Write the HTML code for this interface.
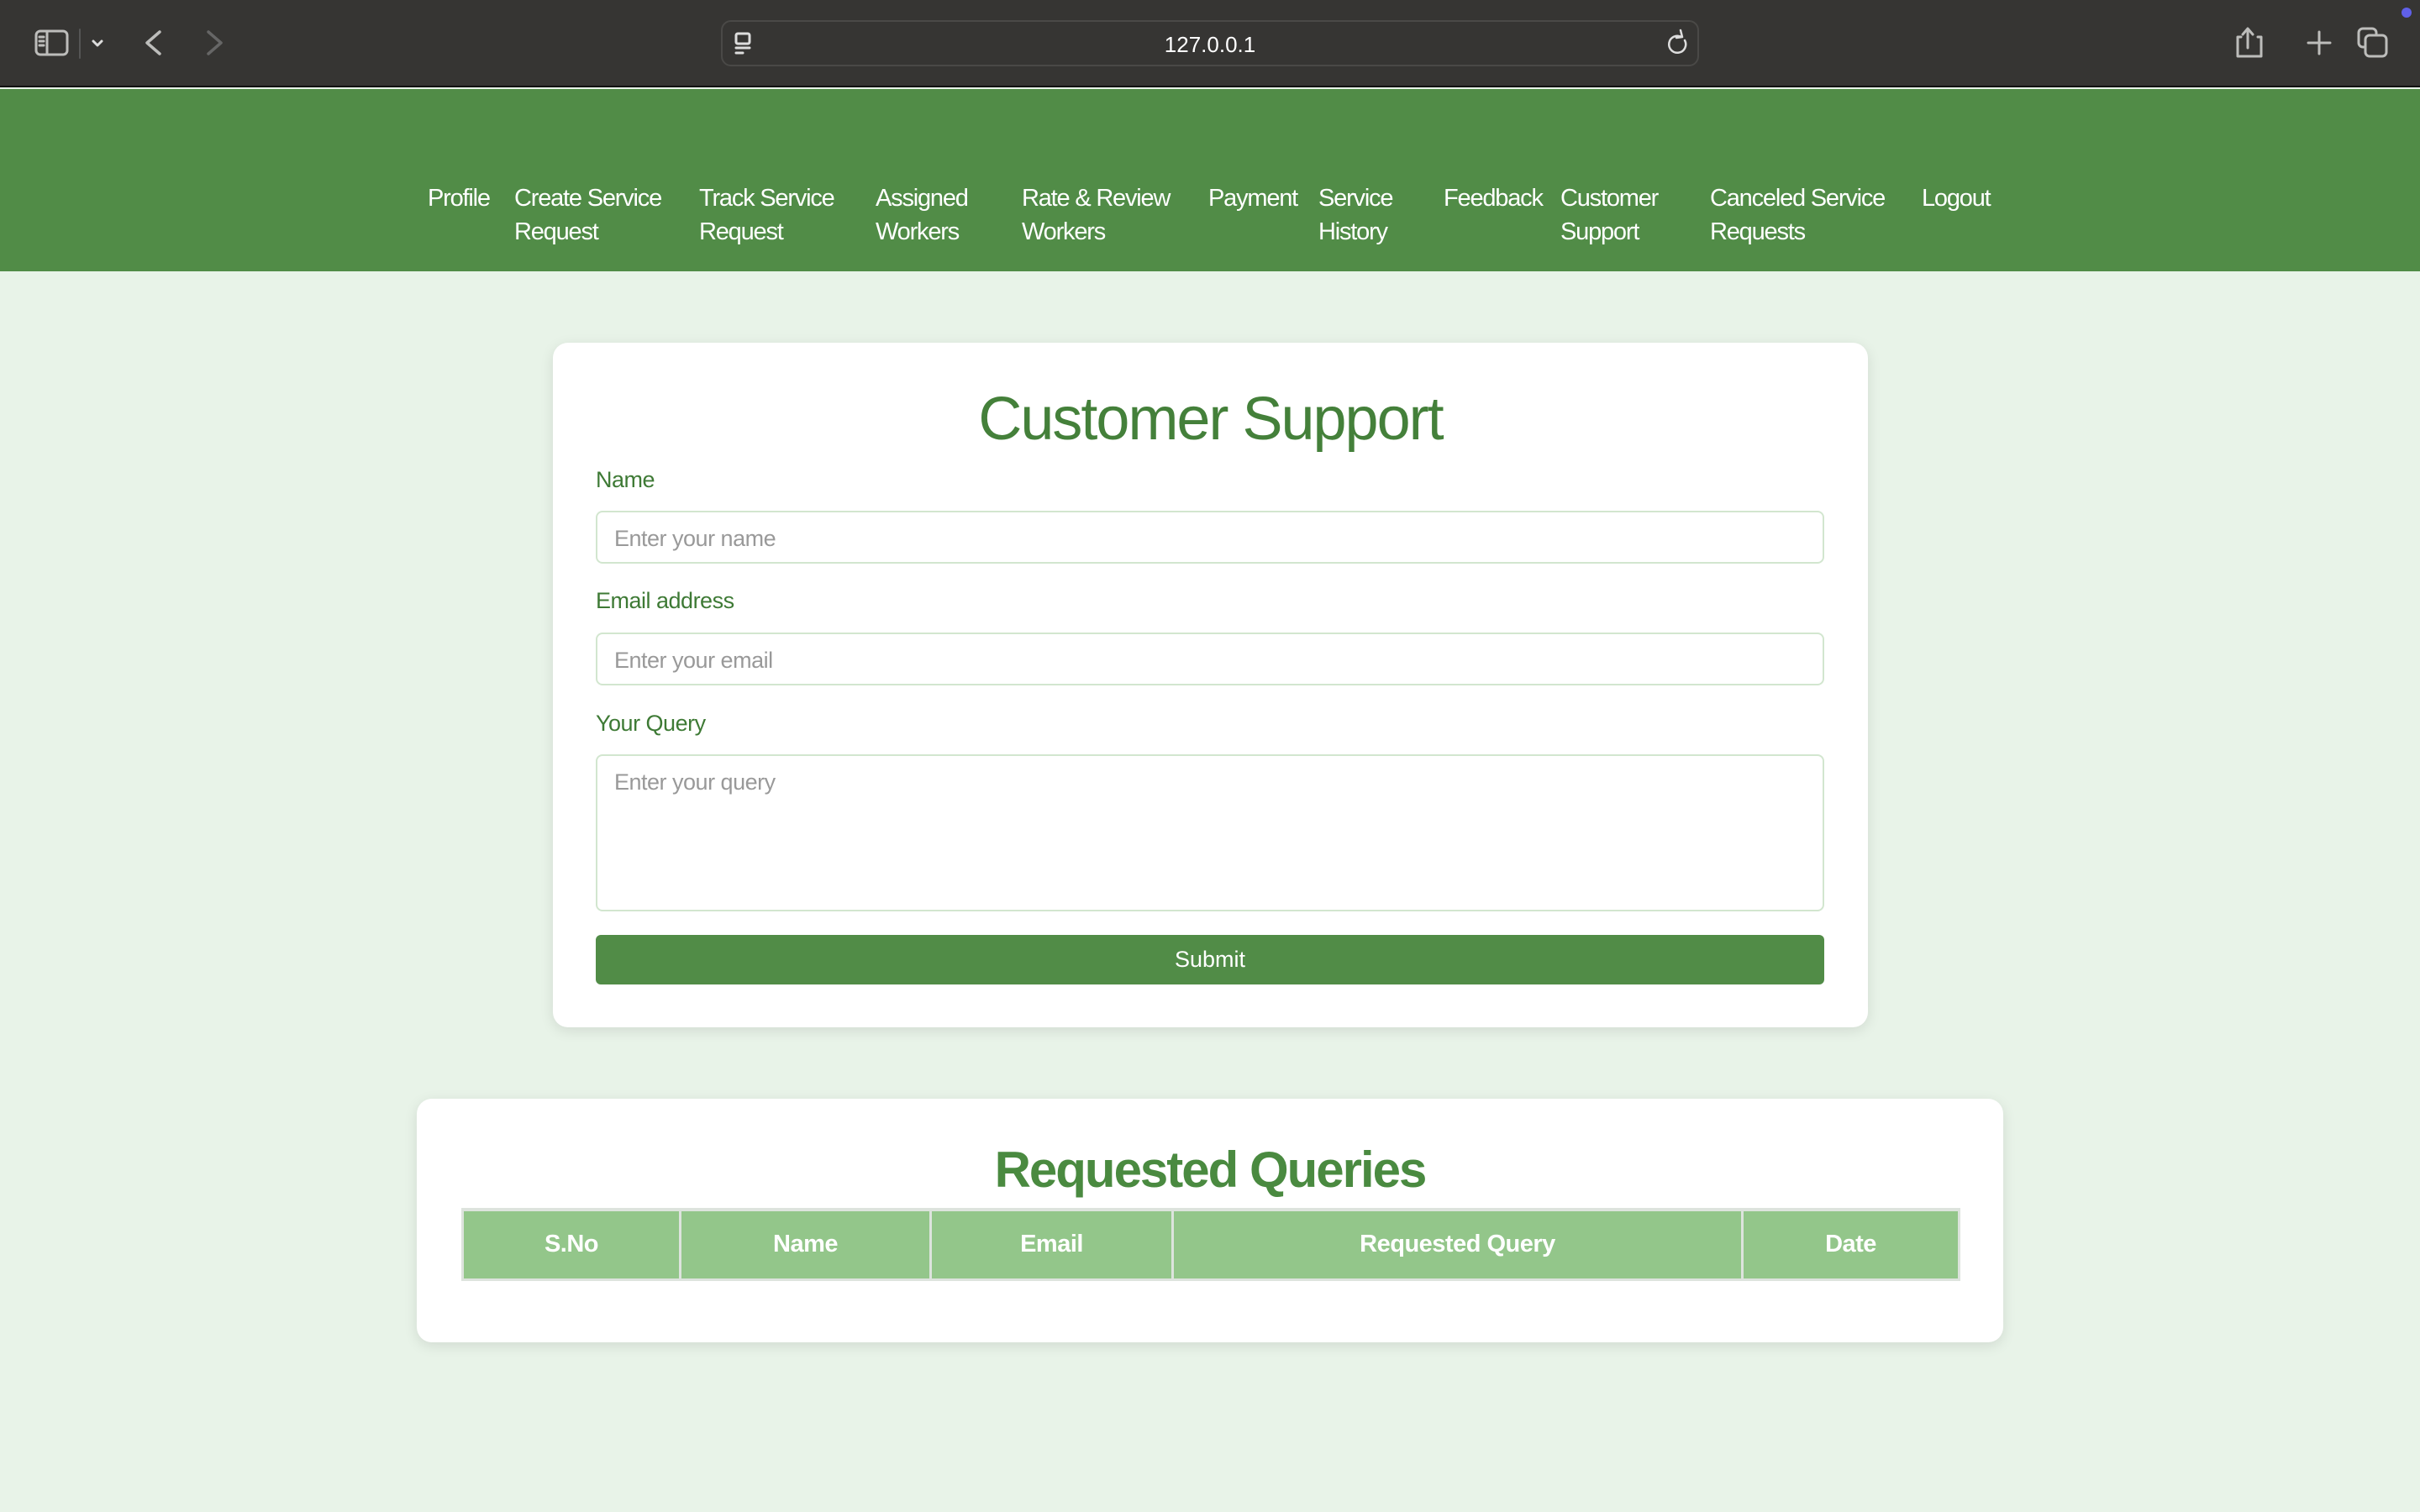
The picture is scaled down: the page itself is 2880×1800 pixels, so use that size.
<!DOCTYPE html>
<html><head><meta charset="utf-8"><style>
*{box-sizing:border-box;margin:0;padding:0}
body{width:2880px;height:1800px;background:#e8f3e8;font-family:"Liberation Sans",sans-serif;position:relative;overflow:hidden}
.tb{position:absolute;left:0;top:0;width:2880px;height:104px;background:#363533;border-bottom:2px solid #111}
.url{position:absolute;left:858px;top:24px;width:1164px;height:55px;border:2px solid #4a4947;border-radius:12px;background:#363533}
.url span{position:absolute;left:0;right:0;top:12px;text-align:center;color:#fff;font-size:26px}
.nav{position:absolute;left:0;top:106px;width:2880px;height:217px;background:#518c47}
.nav div{position:absolute;top:110px;color:#fff;font-size:29px;line-height:40px;letter-spacing:-1.2px}
.card{position:absolute;background:#fff;border-radius:18px;box-shadow:0 4px 16px rgba(0,0,0,0.1)}
.lbl{position:absolute;left:51px;color:#3e7a35;font-size:27px;letter-spacing:-0.5px}
.in{position:absolute;left:51px;width:1462px;border:2px solid #d2e6cf;border-radius:8px;color:#999;font-size:27px;padding:16px 20px;letter-spacing:-0.5px}
h1{position:absolute;left:0;right:0;text-align:center;font-weight:normal;color:#44803a}
table{position:absolute;left:53px;top:130px;width:1784px;border-collapse:collapse}
th{background:#93c68a;color:#fff;font-size:29px;height:83px;border:3px solid #dde3dd;border-top-width:4px;letter-spacing:-0.5px}
</style></head><body>
<div class="tb">
<div class="url"><span>127.0.0.1</span></div>
<svg width="2880" height="104" style="position:absolute;left:0;top:0" fill="none" stroke="#bdbdbb" stroke-width="3" stroke-linecap="round" stroke-linejoin="round">
<rect x="43" y="37" width="37" height="28" rx="5"/><line x1="56" y1="37" x2="56" y2="65"/>
<line x1="47" y1="44" x2="52" y2="44"/><line x1="47" y1="49" x2="52" y2="49"/><line x1="47" y1="54" x2="52" y2="54"/>
<line x1="95" y1="35" x2="95" y2="69" stroke="#555" stroke-width="2"/>
<path d="M111 49l5 5 5-5" stroke="#ddd"/>
<path d="M190 38l-15 13 15 13" stroke-width="3.5"/>
<path d="M248 38l15 13-15 13" stroke="#666" stroke-width="3.5"/>
<rect x="876" y="40" width="16" height="12" rx="2" stroke="#ddd"/><line x1="876" y1="57" x2="892" y2="57" stroke="#ddd"/><line x1="876" y1="63" x2="884" y2="63" stroke="#ddd"/>
<path d="M2001 44a10 10 0 1 0 4 4M2000 36l2 8-7 1" stroke="#ddd" stroke-width="2.5"/>
<path d="M2667 44h-4v23h28V44h-4M2675 35v22M2669 41l6-7 6 7"/>
<path d="M2747 51h26M2760 38v26"/>
<rect x="2807" y="34" width="21" height="22" rx="5"/><rect x="2815" y="42" width="25" height="25" rx="5" fill="#363533"/>
<circle cx="2864" cy="15" r="6" fill="#6060e8" stroke="none"/>
</svg>
</div>
<div class="nav">
<div style="left:509px">Profile</div>
<div style="left:612px">Create Service<br>Request</div>
<div style="left:832px">Track Service<br>Request</div>
<div style="left:1042px">Assigned<br>Workers</div>
<div style="left:1216px">Rate &amp; Review<br>Workers</div>
<div style="left:1438px">Payment</div>
<div style="left:1569px">Service<br>History</div>
<div style="left:1718px">Feedback</div>
<div style="left:1857px">Customer<br>Support</div>
<div style="left:2035px">Canceled Service<br>Requests</div>
<div style="left:2287px">Logout</div>
</div>
<div class="card" style="left:658px;top:408px;width:1565px;height:815px">
<h1 style="top:50px;font-size:72px;letter-spacing:-2px">Customer Support</h1>
<div class="lbl" style="top:148px">Name</div>
<div class="in" style="top:200px;height:63px">Enter your name</div>
<div class="lbl" style="top:292px">Email address</div>
<div class="in" style="top:345px;height:63px">Enter your email</div>
<div class="lbl" style="top:438px">Your Query</div>
<div class="in" style="top:490px;height:187px">Enter your query</div>
<div style="position:absolute;left:51px;top:705px;width:1462px;height:59px;background:#518c47;border-radius:6px;color:#fff;font-size:27px;text-align:center;line-height:59px">Submit</div>
</div>
<div class="card" style="left:496px;top:1308px;width:1888px;height:290px">
<h1 style="top:50px;font-size:60px;font-weight:bold;color:#4a8a40;letter-spacing:-2px">Requested Queries</h1>
<table><tr><th style="width:259px">S.No</th><th style="width:298px">Name</th><th style="width:288px">Email</th><th style="width:678px">Requested Query</th><th>Date</th></tr></table>
</div>
</body></html>
